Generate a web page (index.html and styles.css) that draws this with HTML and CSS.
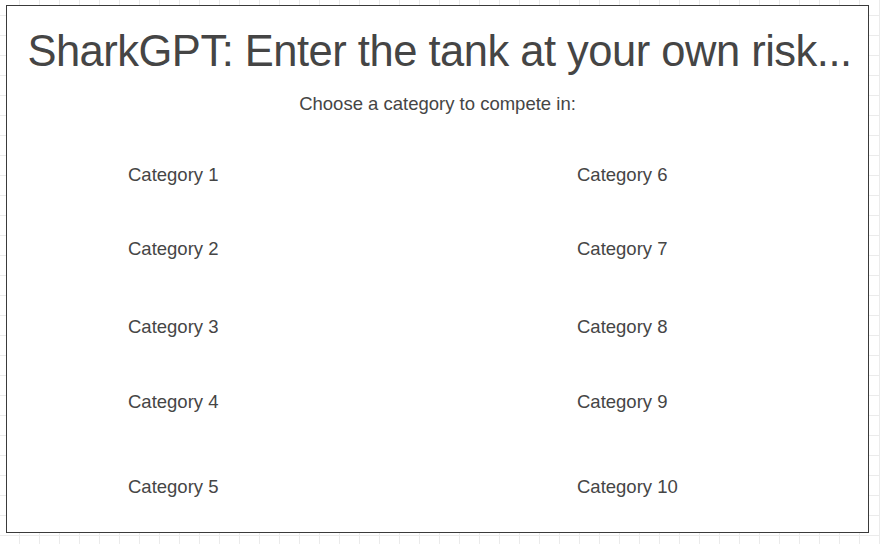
FILE: index.html
```html
<!DOCTYPE html>
<html>
<head>
<meta charset="utf-8">
<link rel="stylesheet" href="styles.css">
</head>
<body>
<div class="board">
  <h1 class="title">SharkGPT: Enter the tank at your own risk...</h1>
  <p class="subtitle">Choose a category to compete in:</p>
  <div class="cats">
    <div class="col">
      <div class="cat r1">Category 1</div>
      <div class="cat r2">Category 2</div>
      <div class="cat r3">Category 3</div>
      <div class="cat r4">Category 4</div>
      <div class="cat r5">Category 5</div>
    </div>
    <div class="col">
      <div class="cat r1">Category 6</div>
      <div class="cat r2">Category 7</div>
      <div class="cat r3">Category 8</div>
      <div class="cat r4">Category 9</div>
      <div class="cat r5">Category 10</div>
    </div>
  </div>
</div>
</body>
</html>
```

FILE: styles.css
```css
html, body {
  margin: 0;
  padding: 0;
  width: 880px;
  height: 544px;
  overflow: hidden;
}
body {
  background-color: #ffffff;
  background-image:
    linear-gradient(to right, #ebebeb 1px, transparent 1px),
    linear-gradient(to bottom, #ebebeb 1px, transparent 1px);
  background-size: 20px 20px;
  background-position: 19px 15px;
  font-family: "Liberation Sans", Arial, sans-serif;
  color: #454545;
}
.board {
  box-sizing: border-box;
  margin: 5px 0 0 6px;
  width: 863px;
  height: 528px;
  border: 1px solid #3a3a3a;
  background: #ffffff;
  display: flex;
  flex-direction: column;
  align-items: center;
}
.title {
  margin: 20px 0 0 0;
  padding-left: 4px;
  font-weight: normal;
  font-size: 43.5px;
  letter-spacing: -0.5px;
  line-height: 50px;
  white-space: nowrap;
}
.subtitle {
  margin: 16px 0 0 0;
  font-size: 18.5px;
  line-height: 24px;
}
.cats {
  align-self: stretch;
  display: grid;
  grid-template-columns: 449px 1fr;
  padding-left: 121px;
  margin-top: 47px;
}
.col {
  display: flex;
  flex-direction: column;
}
.cat {
  font-size: 18.5px;
  line-height: 24px;
}
.r2 { margin-top: 50px; }
.r3 { margin-top: 54px; }
.r4 { margin-top: 51px; }
.r5 { margin-top: 61px; }
```
